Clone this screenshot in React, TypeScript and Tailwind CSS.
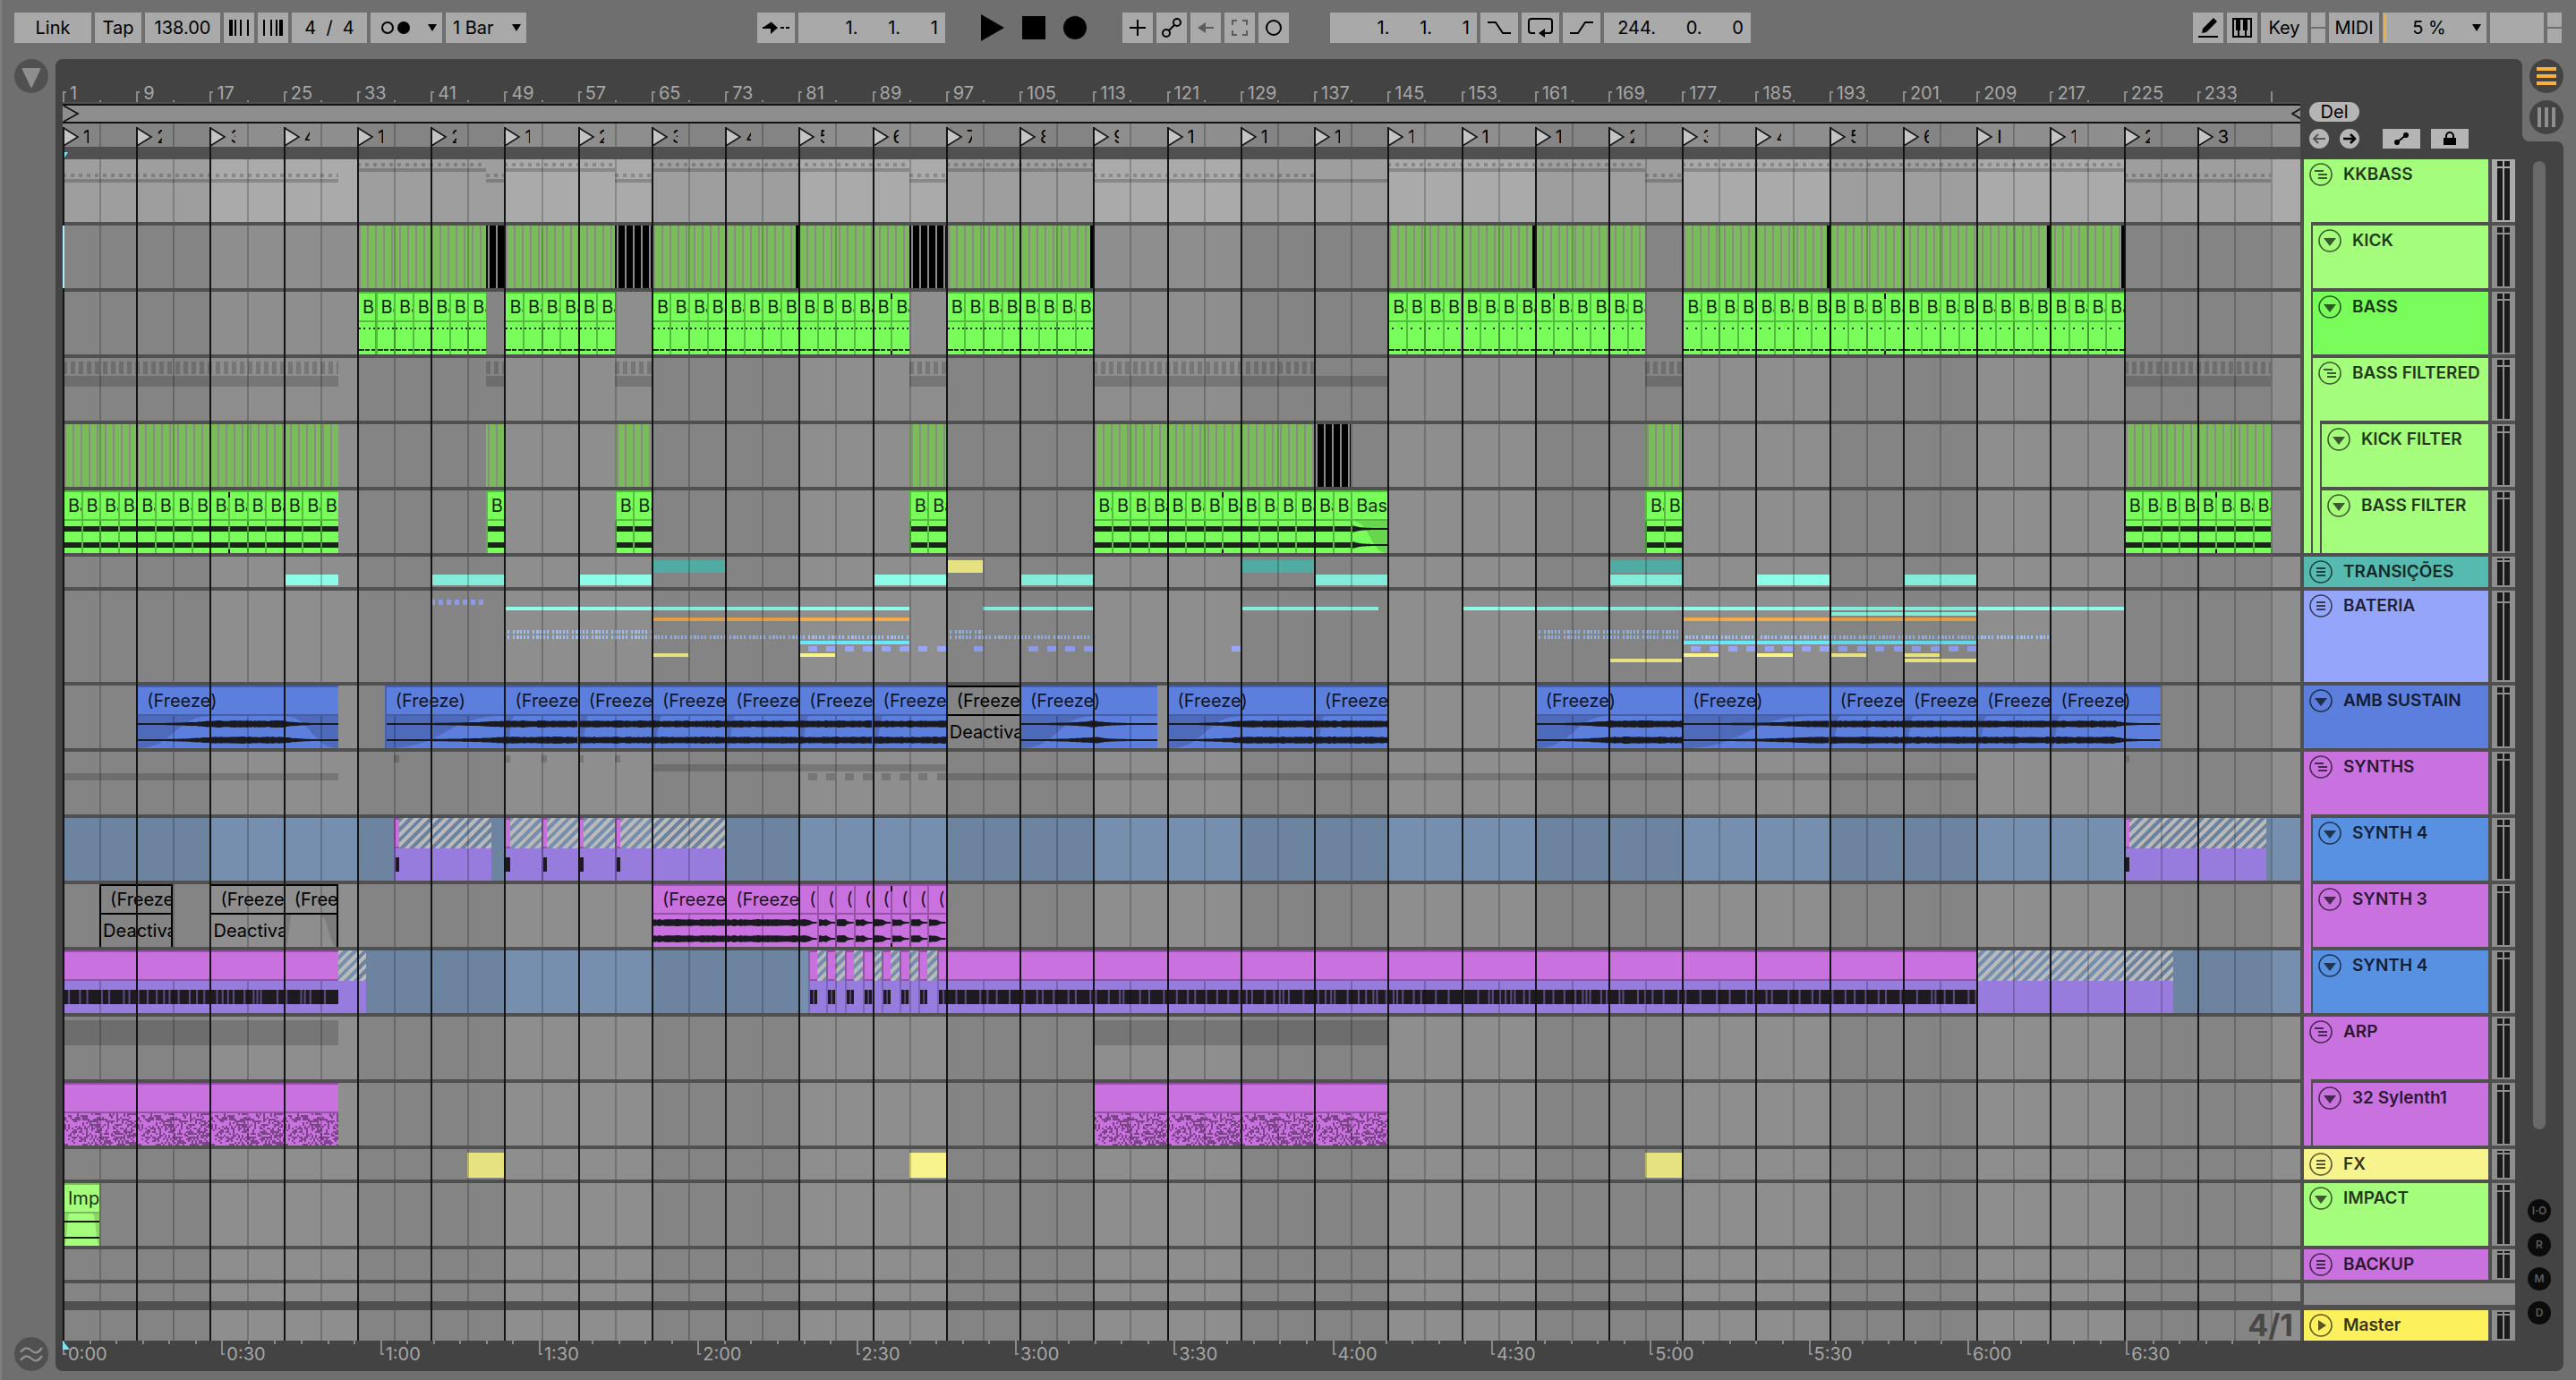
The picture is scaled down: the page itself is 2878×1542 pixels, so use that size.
import type { ReactNode } from "react"
import clsx from "clsx"

// number of bars that fit in the arrangement view
const VISIBLE_BARS = 243.2

type Range = [number, number]

const place = (start: number, end: number) => ({
  left: `${((start - 1) / VISIBLE_BARS) * 100}%`,
  width: `${((end - start) / VISIBLE_BARS) * 100}%`,
})

const at = (bar: number) => ({ left: `${((bar - 1) / VISIBLE_BARS) * 100}%` })

const every = (from: number, to: number, step: number) => {
  const list: number[] = []
  for (let i = from; i <= to; i += step) list.push(i)
  return list
}

const majorBars = every(1, 233, 8)
const minorBars = [...every(5, 237, 8), 241]
const shadedBands = every(1, 225, 32)

function random(seed: number) {
  let s = seed
  return () => {
    s = (s * 1103515245 + 12345) % 2147483648
    return s / 2147483648
  }
}

/* ---------- small drawing helpers ---------- */

interface SegProps {
  range: Range
  className: string
}

function Seg({ range, className }: SegProps) {
  return <div className={clsx("absolute", className)} style={place(range[0], range[1])} />
}

function Segs({ ranges, className }: { ranges: Range[]; className: string }) {
  return (
    <>
      {ranges.map((range) => (
        <Seg key={range[0]} range={range} className={className} />
      ))}
    </>
  )
}

interface WaveProps {
  bars: number
  fadeIn?: number
  fadeOut?: number
  seed?: number
  amp?: number
  className: string
}

function Wave({ bars, fadeIn = 0, fadeOut = 0, seed = 1, amp = 4, className }: WaveProps) {
  const next = random(seed * 97 + 13)
  const width = Math.round(bars * 10)
  const top: string[] = []
  const bottom: string[] = []
  for (let x = 0; x <= width; x += 2) {
    const bar = x / 10
    let level = 1
    if (fadeIn && bar < fadeIn) level = Math.pow(bar / fadeIn, 3)
    if (fadeOut && bar > bars - fadeOut) level = Math.min(level, Math.pow((bars - bar) / fadeOut, 4))
    const peak = 1 + (amp - 1) * level * (0.7 + next() * 0.3)
    top.push(`${x} ${(6 - peak).toFixed(1)}`)
    bottom.unshift(`${x} ${(6 + peak).toFixed(1)}`)
  }
  return (
    <svg viewBox={`0 0 ${width} 12`} preserveAspectRatio="none" className={clsx("absolute left-0 h-3 w-full", className)}>
      <path d={`M${top.join("L")}L${bottom.join("L")}Z`} className="fill-[#1a1b20]" />
    </svg>
  )
}

interface FadeProps {
  bars: number
  fadeIn?: number
  fadeOut?: number
  className: string
}

function Fade({ bars, fadeIn = 0, fadeOut = 0, className }: FadeProps) {
  const w = bars * 10
  const a = fadeIn * 10
  const b = w - fadeOut * 10
  return (
    <svg viewBox={`0 0 ${w} 36`} preserveAspectRatio="none" className={clsx("absolute inset-0 h-full w-full", className)}>
      {fadeIn > 0 && <path d={`M0 0V36C${a * 0.5} 36 ${a * 0.5} 0 ${a} 0Z`} />}
      {fadeOut > 0 && <path d={`M${w} 0V36C${(b + w) / 2} 36 ${(b + w) / 2} 0 ${b} 0Z`} />}
    </svg>
  )
}

function NoteBlock({ bars, seed }: { bars: number; seed: number }) {
  const next = random(seed)
  const width = bars * 10
  const gaps: number[] = []
  for (let x = 4; x < width; x += 4 + Math.round(next() * 7) * 2) gaps.push(x)
  return (
    <svg viewBox={`0 0 ${width} 16`} preserveAspectRatio="none" className="absolute top-[10px] left-0 h-4 w-full">
      <rect width={width} height="16" className="fill-[#1e1b20]" />
      <path d={gaps.map((x) => `M${x} 0h2v16h-2Z`).join("")} className="fill-[#5c4a82]" />
    </svg>
  )
}

function arpCells() {
  const next = random(77)
  let d = ""
  for (let y = 0; y < 36; y += 2) {
    for (let x = 0; x < 82; x += 2) {
      if (next() < 0.42) d += `M${x} ${y}h2v2h-2Z`
    }
  }
  return d
}
const arpPath = arpCells()

/* ---------- clips ---------- */

const tones = {
  green: { title: "bg-[#78fd5a] border-[#54bd3f]", body: "bg-[#78fd5a] border-[#54bd3f]", fade: "fill-[#66d64c]" },
  lime: { title: "bg-[#a5fd7c] border-[#7cbc5e]", body: "bg-[#a5fd7c] border-[#7cbc5e]", fade: "fill-[#8cd66a]" },
  blue: { title: "bg-[#5c7fde] border-[#4560a8]", body: "bg-[#5c7fde] border-[#4560a8]", fade: "fill-[#4e6bbb]" },
  pink: { title: "bg-[#c871df] border-[#9553a6]", body: "bg-[#c871df] border-[#9553a6]", fade: "fill-[#aa60bd]" },
  violet: { title: "bg-[#c871df] border-[#9553a6]", body: "bg-[#977cde] border-[#7a63b8]", fade: "fill-[#aa60bd]" },
}

interface ClipProps {
  range: Range
  tone: keyof typeof tones
  label?: string
  indent?: boolean
  children?: ReactNode
}

function Clip({ range, tone, label, indent, children }: ClipProps) {
  const t = tones[tone]
  return (
    <div className="absolute inset-y-0 overflow-hidden" style={place(range[0], range[1])}>
      <div className={clsx("absolute inset-x-0 top-[34px] bottom-0 z-20 overflow-hidden border-l-2", t.body)}>{children}</div>
      <div
        className={clsx(
          "absolute inset-x-0 top-0 z-40 h-[34px] overflow-hidden border-y-2 border-l-2 text-xl leading-[30px] whitespace-nowrap text-black/85",
          indent ? "pl-2.5" : "pl-1",
          t.title,
        )}
      >
        {label}
      </div>
    </div>
  )
}

function OffClip({ range, label, note, end }: { range: Range; label: string; note?: string; end?: boolean }) {
  return (
    <div
      className={clsx("absolute inset-y-0 z-40 overflow-hidden border-l-2 border-black text-xl whitespace-nowrap text-black", end && "border-r-2")}
      style={place(range[0], range[1])}
    >
      <div className="h-[34px] overflow-hidden border-y-2 border-black pl-2.5 leading-[30px]">{label}</div>
      <div className="relative h-9 overflow-hidden pl-0.5 leading-9">
        {!note && <Fade bars={6} fadeIn={0.8} fadeOut={2} className="fill-black/12" />}
        {note}
      </div>
    </div>
  )
}

function Hatch({ range, foot = true }: { range: Range; foot?: boolean }) {
  return (
    <div className="absolute inset-y-0" style={place(range[0], range[1])}>
      <div className="absolute inset-x-0 top-0 z-20 h-[34px] bg-[repeating-linear-gradient(135deg,#b9b9b9_0_4px,transparent_4px_8px)]" />
      {foot && <div className="absolute inset-x-0 top-[34px] bottom-0 z-20 bg-[#977cde]" />}
    </div>
  )
}

const kickStripes = "inset-y-0 z-20 bg-[repeating-linear-gradient(90deg,#7abb5c_0_2px,#8e888b_2px_4px,#7abb5c_4px_9px)]"
const kickMuted = "inset-y-0 z-20 bg-[repeating-linear-gradient(90deg,#000_0_2px,#8a8a8a_2px_4px,#000_4px_9px)]"
const bassDots = "bg-[repeating-linear-gradient(90deg,#12300c_0_2px,transparent_2px_5px,#12300c_5px_7px,transparent_7px_11px)]"
const bassSparse = "bg-[repeating-linear-gradient(90deg,transparent_0_3px,#12300c_3px_5px,transparent_5px_10px)]"
const bassLine = "bg-[repeating-linear-gradient(90deg,#12300c_0_6px,transparent_6px_7px,#12300c_7px_12px,transparent_12px_14px)]"

// two-bar loops that fill a range
const loops = (ranges: Range[]) => ranges.flatMap(([s, e]) => every(s, e - 2, 2).map((b): Range => [b, b + 2]))

const bassMain: Range[] = [[33, 47], [49, 61], [65, 93], [97, 113], [145, 173], [177, 225]]
const bassBreak: Range[] = [[1, 31], [47, 49], [61, 65], [93, 97], [113, 145], [173, 177], [225, 241]]
const kickBreak: Range[] = [[1, 31], [47, 49], [61, 65], [93, 97], [113, 137], [173, 177], [225, 241]]

function Split({ bar }: { bar: number }) {
  return (
    <div className="absolute inset-y-0 z-40 flex w-0.5 flex-col justify-between pt-0.5" style={at(bar)}>
      <div className="h-1.5 bg-black" />
      <div className="h-1 bg-black" />
    </div>
  )
}

function BassClips() {
  return (
    <>
      {loops(bassMain).map((r) => (
        <Clip key={r[0]} range={r} tone="green" label="Bass">
          <div className={clsx("mt-1.5 h-0.5", r[0] < 145 ? bassDots : bassSparse)} />
          <div className={clsx("mt-[22px] h-0.5", bassLine)} />
        </Clip>
      ))}
      <Split bar={91} />
      <Split bar={163} />
      <Split bar={199} />
    </>
  )
}

function BassFilterClips() {
  const blocks: Range[] = [[1, 31], [47, 49], [61, 65], [93, 97], [113, 141], [173, 177], [225, 241]]
  return (
    <>
      {loops(blocks).map((r) => (
        <Clip key={r[0]} range={r} tone="green" label="Bass">
          <div className="mt-1.5 h-1.5 bg-[#1a2418]" />
          <div className="mt-3 h-1.5 bg-[#1a2418]" />
        </Clip>
      ))}
      <Clip range={[141, 145]} tone="green" label="Bass">
        <Fade bars={4} fadeOut={4} className={tones.green.fade} />
        <Wave bars={4} fadeOut={4} className="top-[3px]" />
        <Wave bars={4} fadeOut={4} className="top-[21px]" />
      </Clip>
      <Split bar={19} />
      <Split bar={127} />
      <Split bar={235} />
    </>
  )
}

const ambClips: { range: Range; fadeIn: number; fadeOut?: number }[] = [
  { range: [9, 31], fadeIn: 8, fadeOut: 6 },
  { range: [36, 49], fadeIn: 13 },
  { range: [49, 57], fadeIn: 1 },
  { range: [57, 65], fadeIn: 1 },
  { range: [65, 73], fadeIn: 1 },
  { range: [73, 81], fadeIn: 1 },
  { range: [81, 89], fadeIn: 1 },
  { range: [89, 97], fadeIn: 1 },
  { range: [105, 120], fadeIn: 8, fadeOut: 7 },
  { range: [121, 137], fadeIn: 8 },
  { range: [137, 145], fadeIn: 1 },
  { range: [161, 177], fadeIn: 8 },
  { range: [177, 193], fadeIn: 14 },
  { range: [193, 201], fadeIn: 1 },
  { range: [201, 209], fadeIn: 1 },
  { range: [209, 217], fadeIn: 1 },
  { range: [217, 229], fadeIn: 1, fadeOut: 5 },
]

function AmbClips() {
  return (
    <>
      {ambClips.map(({ range, fadeIn, fadeOut }, i) => {
        const bars = range[1] - range[0]
        const rise = fadeIn > 1 ? fadeIn : 0
        const shadeOut = range[0] === 9 ? fadeOut : 0
        return (
          <Clip key={range[0]} range={range} tone="blue" label="(Freeze)" indent>
            <Fade bars={bars} fadeIn={fadeIn} fadeOut={shadeOut} className={tones.blue.fade} />
            <Wave bars={bars} fadeIn={rise} fadeOut={fadeOut} seed={i + 1} className="top-[3px]" />
            <Wave bars={bars} fadeIn={rise} fadeOut={fadeOut} seed={i + 31} className="top-[21px]" />
          </Clip>
        )
      })}
      <OffClip range={[97, 105]} label="(Freeze)" note="Deactivated" />
    </>
  )
}

function SynthThreeClips() {
  return (
    <>
      <OffClip range={[5, 13]} label="(Freeze)" note="Deactivated" end />
      <OffClip range={[17, 25]} label="(Freeze)" note="Deactivated" />
      <OffClip range={[25, 31]} label="(Freeze)" end />
      {([[65, 73], [73, 81]] as Range[]).map((r) => (
        <Clip key={r[0]} range={r} tone="pink" label="(Freeze)" indent>
          <Wave bars={8} seed={r[0]} className="top-[3px]" />
          <Wave bars={8} seed={r[0]} className="top-[21px]" />
        </Clip>
      ))}
      {every(81, 95, 2).map((b) => (
        <Clip key={b} range={[b, b + 2]} tone="pink" label="(Freeze)" indent>
          <Wave bars={2} fadeOut={1} seed={b} className="top-[3px]" />
          <Wave bars={2} fadeOut={1} seed={b} className="top-[21px]" />
        </Clip>
      ))}
      <Split bar={91} />
    </>
  )
}

function SynthStabs() {
  const stabs: Range[] = [[37, 47.6], [49, 53], [53, 57], [57, 61], [61, 73], [225, 240.5]]
  return (
    <>
      <Segs ranges={stabs} className="top-[34px] bottom-0 z-20 border-l-2 border-[#7a63b8] bg-[#977cde]" />
      {stabs.map((r) => (
        <Hatch key={r[0]} range={r} foot={false} />
      ))}
      {stabs.map(([s]) => (
        <Seg key={s} range={[s, s + 0.6]} className="top-0 z-20 h-[34px] border-y-2 border-l-2 border-[#9553a6] bg-[#c871df]" />
      ))}
      {stabs.map(([s]) => (
        <Seg key={s} range={[s + 0.2, s + 0.6]} className="top-11 z-20 h-4 bg-[#1e1b20]" />
      ))}
    </>
  )
}

function SynthLine() {
  return (
    <>
      <Clip range={[1, 31]} tone="violet">
        <NoteBlock bars={30} seed={5} />
      </Clip>
      <Hatch range={[31, 34]} />
      {every(82, 94, 2).map((b) => (
        <Hatch key={b} range={[b + 0.9, b + 2]} />
      ))}
      {every(82, 94, 2).map((b) => (
        <Clip key={b} range={[b, b + 1]} tone="violet">
          <NoteBlock bars={1} seed={b} />
        </Clip>
      ))}
      <Clip range={[96, 209]} tone="violet">
        <NoteBlock bars={113} seed={11} />
      </Clip>
      <Hatch range={[209, 230.4]} />
    </>
  )
}

function ArpClips() {
  return (
    <>
      {([[1, 31], [113, 145]] as Range[]).map((r, i) => (
        <Clip key={r[0]} range={r} tone="pink">
          <svg className="absolute inset-0 h-full w-full">
            <defs>
              <pattern id={`arp-${i}`} width="82" height="36" patternUnits="userSpaceOnUse">
                <path d={arpPath} className="fill-[#7c4489]" />
              </pattern>
            </defs>
            <rect width="100%" height="100%" fill={`url(#arp-${i})`} />
          </svg>
        </Clip>
      ))}
    </>
  )
}

/* ---------- group overviews ---------- */

const dash = "bg-[repeating-linear-gradient(90deg,rgba(0,0,0,0.2)_0_4px,transparent_4px_9px)]"
const wideDash = "bg-[repeating-linear-gradient(90deg,rgba(0,0,0,0.17)_0_5px,transparent_5px_9px)]"

function BateriaOverview() {
  const hats = "bg-[repeating-linear-gradient(90deg,#97bdf2_0_2px,transparent_2px_4px,#97bdf2_4px_6px,transparent_6px_10px,#97bdf2_10px_12px,transparent_12px_14px,#97bdf2_14px_17px,transparent_17px_18px,#97bdf2_18px_20px,transparent_20px_22px)]"
  const hits = [...every(82, 96, 2), 100, ...every(106, 112, 2), 128, ...every(178, 208, 2)]
  return (
    <>
      <Seg range={[41, 46.8]} className="top-2.5 h-1.5 bg-[repeating-linear-gradient(90deg,#97a6fa_0_5px,transparent_5px_9px)]" />
      <Segs ranges={[[49, 93], [101, 113], [129, 144], [153, 225]]} className="top-[18px] h-1 bg-[#8dfde8]" />
      <Seg range={[193, 209]} className="top-6 h-1 bg-[#8dfde8]" />
      <Segs ranges={[[65, 93], [177, 209]]} className="top-[30px] h-1 bg-[#f3aa47]" />
      <Segs ranges={[[49, 65], [97, 101], [161, 177]]} className={clsx("top-11 h-1", hats)} />
      <Segs ranges={[[49, 93], [97, 113], [161, 217]]} className={clsx("top-[50px] h-1", hats)} />
      <Segs ranges={[[81, 93], [177, 209]]} className="top-14 h-1 bg-[#65e9ff]" />
      {hits.map((b) => (
        <Seg key={b} range={[b, b + 1]} className="top-[62px] h-1.5 bg-[#97a6fa]" />
      ))}
      <Segs ranges={[[65, 69], [81, 85], [177, 181], [185, 189], [193, 197], [201, 205]]} className="top-[70px] h-1 bg-[#f8f38b]" />
      <Segs ranges={[[169, 177], [201, 209]]} className="top-[76px] h-1 bg-[#f8f38b]" />
    </>
  )
}

function SynthsOverview() {
  const shade = "bg-black/17"
  return (
    <>
      {[37, 49, 53, 57, 61, 225].map((b) => (
        <Seg key={b} range={[b, b + 0.6]} className={clsx("top-1 h-2", shade)} />
      ))}
      <Seg range={[65, 97]} className={clsx("top-3.5 h-2", shade)} />
      <Segs ranges={[[1, 31], [97, 209]]} className={clsx("top-6 h-2", shade)} />
      {every(82, 96, 2).map((b) => (
        <Seg key={b} range={[b, b + 1]} className={clsx("top-6 h-2", shade)} />
      ))}
    </>
  )
}

/* ---------- lanes ---------- */

interface LaneProps {
  size?: "tall" | "short" | "large" | "blank" | "marks"
  base?: string
  children?: ReactNode
}

const laneHeights = {
  tall: "h-[70px]",
  short: "h-[34px]",
  large: "h-[102px]",
  blank: "h-5",
  marks: "h-[26px]",
}

function Lane({ size = "tall", base = "bg-[#8e8e8e]", children }: LaneProps) {
  return (
    <div className={clsx("relative overflow-hidden", laneHeights[size], base)}>
      {children}
      {shadedBands.map((b) => (
        <Seg key={b} range={[b, b + 16]} className="inset-y-0 z-10 bg-black/7" />
      ))}
      {minorBars.map((b) => (
        <div key={b} className="absolute inset-y-0 z-30 w-0.5 bg-black/20" style={at(b)} />
      ))}
    </div>
  )
}

function Lanes() {
  return (
    <div className="flex flex-col gap-1">
      <Lane base="bg-[#aaaaaa]">
        <Segs ranges={bassMain} className={clsx("top-1 h-1", dash)} />
        <Segs ranges={bassMain} className="top-2.5 h-1 bg-black/20" />
        <Segs ranges={kickBreak} className={clsx("top-4 h-1", dash)} />
        <Segs ranges={bassBreak} className="top-[22px] h-1 bg-black/20" />
      </Lane>
      <Lane>
        <Segs ranges={bassMain} className={kickStripes} />
        <Segs ranges={[[47, 49], [61, 65], [93, 97]]} className={kickMuted} />
        {[80.7, 112.7, 160.7, 192.7, 216.7, 224.7].map((b) => (
          <Seg key={b} range={[b, b + 0.3]} className="inset-y-0 z-20 bg-black" />
        ))}
        <div className="absolute inset-y-0 left-0 z-60 w-0.5 bg-[#a9eefb]" />
      </Lane>
      <Lane>
        <BassClips />
      </Lane>
      <Lane>
        <Segs ranges={kickBreak} className={clsx("top-1 h-3.5", wideDash)} />
        <Segs ranges={bassBreak} className="top-5 h-3 bg-black/17" />
      </Lane>
      <Lane>
        <Segs ranges={kickBreak} className={kickStripes} />
        <Seg range={[137, 141]} className={kickMuted} />
      </Lane>
      <Lane>
        <BassFilterClips />
      </Lane>
      <Lane size="short">
        <Segs ranges={[[65, 73], [129, 137], [169, 177]]} className="top-1 h-3.5 bg-[#57bab0]" />
        <Seg range={[97, 101]} className="top-1 h-3.5 bg-[#f8f38b]" />
        <Segs
          ranges={[[25, 31], [41, 49], [57, 65], [89, 97], [105, 113], [137, 145], [169, 177], [185, 193], [201, 209]]}
          className="top-5 h-3 bg-[#8dfde8]"
        />
      </Lane>
      <Lane size="large">
        <BateriaOverview />
      </Lane>
      <Lane>
        <AmbClips />
      </Lane>
      <Lane>
        <SynthsOverview />
      </Lane>
      <Lane base="bg-[#768fae]">
        <SynthStabs />
      </Lane>
      <Lane>
        <SynthThreeClips />
      </Lane>
      <Lane base="bg-[#768fae]">
        <SynthLine />
      </Lane>
      <Lane>
        <Segs ranges={[[1, 31], [113, 145]]} className="top-1 h-7 bg-black/17" />
      </Lane>
      <Lane>
        <ArpClips />
      </Lane>
      <Lane size="short">
        <Segs ranges={[[45, 49], [93, 97], [173, 177]]} className="top-1 h-7 bg-[#f8f38b]" />
      </Lane>
      <Lane>
        <Clip range={[1, 5]} tone="lime" label="Impact">
          <Fade bars={4} fadeIn={0.6} fadeOut={0.8} className={tones.lime.fade} />
          <div className="relative mt-2 h-0.5 bg-[#16200f]" />
          <div className="relative mt-4 h-0.5 bg-[#16200f]" />
        </Clip>
      </Lane>
      <Lane size="short" />
      <Lane size="blank" />
      <div className="relative mt-1.5">
        <Lane size="short" />
        <span className="absolute right-2 bottom-0 z-40 text-[34px] leading-[34px] font-bold text-[#484848]">4/1</span>
      </div>
    </div>
  )
}

/* ---------- rulers ---------- */

function BarRuler() {
  return (
    <div className="relative h-12 overflow-hidden text-[#a6a6a6]">
      {majorBars.map((b) => (
        <div key={b} className="absolute bottom-0 flex h-5 gap-1" style={at(b)}>
          <div className="mt-2 h-3 w-1 border-t-2 border-l-2 border-[#8a8a8a]" />
          <span className="text-xl leading-[20px]">{b}</span>
        </div>
      ))}
      {every(5, 237, 8).map((b) => (
        <div key={b} className="absolute bottom-0 h-0.5 w-0.5 bg-[#8a8a8a]" style={at(b)} />
      ))}
      <div className="absolute bottom-0 h-3 w-0.5 bg-[#8a8a8a]" style={at(241)} />
    </div>
  )
}

const locatorNames = [
  "1", "2", "3", "4", "1", "2", "1", "2", "3", "4", "5", "6", "7", "8", "9",
  "10", "11", "12", "1", "1", "1", "2", "3", "4", "5", "6", "I", "1", "2", "3",
]

function Locators() {
  return (
    <div className="relative">
      <Lane size="marks" />
      {majorBars.map((b, i) => (
        <button key={b} type="button" className="absolute bottom-0 z-40 flex h-[22px] items-center gap-1" style={at(b)} aria-label={`Locator ${b}`}>
          <svg width="19" height="22" viewBox="0 0 19 22">
            <path d="M1 1 17 11 1 21Z" fill="#c4c4c4" stroke="#161616" strokeWidth="1.6" />
          </svg>
          <span className={clsx("overflow-hidden text-left text-xl leading-[22px]", b < 233 && "w-1.5")}>{locatorNames[i]}</span>
        </button>
      ))}
    </div>
  )
}

function TimeRuler() {
  // 138 bpm: one bar of 4/4 lasts 240 / 138 seconds
  const barAt = (sec: number) => 1 + (sec * 138) / 240
  const label = (sec: number) => `${Math.floor(sec / 60)}:${String(sec % 60).padStart(2, "0")}`
  return (
    <div className="relative h-[34px] text-[#a6a6a6]">
      {every(0, 415, 5).map((s) => (
        <div key={s} className="absolute top-0 h-1 w-0.5 bg-[#8a8a8a]" style={at(barAt(s))} />
      ))}
      {every(0, 390, 30).map((s) => (
        <div key={s} className="absolute top-0 flex gap-0.5" style={at(barAt(s))}>
          <div className="h-4 w-1 border-b-2 border-l-2 border-[#8a8a8a]" />
          <span className="mt-1 text-xl leading-[22px]">{label(s)}</span>
        </div>
      ))}
      <svg width="8" height="10" className="absolute top-0 left-0">
        <path d="M0 0 8 10H0Z" fill="#7fe3f7" />
      </svg>
    </div>
  )
}

/* ---------- track headers ---------- */

type Glyph = "group" | "lanes" | "fold" | "play"

function HeaderIcon({ glyph }: { glyph: Glyph }) {
  return (
    <svg width="26" height="26" viewBox="0 0 26 26" fill="none" stroke="currentColor" strokeWidth="1.6" className="shrink-0 opacity-80">
      <circle cx="13" cy="13" r="12" />
      {glyph === "group" && <path d="M6 9h10M10 13h10M10 17h10" strokeWidth="2" />}
      {glyph === "lanes" && <path d="M8 9h10M8 13h10M8 17h10" strokeWidth="2" />}
      {glyph === "fold" && <path d="M6 10h14l-7 9Z" fill="currentColor" stroke="none" />}
      {glyph === "play" && <path d="M10 7v12l9-6Z" fill="currentColor" stroke="none" />}
    </svg>
  )
}

interface HeaderProps {
  name: string
  glyph: Glyph
  color?: string
  size?: keyof typeof laneHeights
}

function Header({ name, glyph, color, size = "tall" }: HeaderProps) {
  return (
    <div className={clsx("flex items-start gap-3 overflow-hidden pt-1 pl-1.5 text-black/80", laneHeights[size], color)}>
      <button type="button" aria-label={`Unfold ${name}`}>
        <HeaderIcon glyph={glyph} />
      </button>
      <span className="text-[19px] leading-[26px] font-semibold whitespace-nowrap">{name}</span>
    </div>
  )
}

function Group({ color, header, children }: { color: string; header: ReactNode; children: ReactNode }) {
  return (
    <div className={color}>
      {header}
      <div className="ml-2 flex flex-col gap-1 bg-[#505050] pt-1 pl-0.5">{children}</div>
    </div>
  )
}

function Headers() {
  return (
    <div className="flex w-[206px] flex-col gap-1">
      <Group color="bg-[#a5fd7c]" header={<Header name="KKBASS" glyph="group" />}>
        <Header name="KICK" glyph="fold" color="bg-[#a5fd7c]" />
        <Header name="BASS" glyph="fold" color="bg-[#78fd5a]" />
        <Group color="bg-[#a5fd7c]" header={<Header name="BASS FILTERED" glyph="group" />}>
          <Header name="KICK FILTER" glyph="fold" color="bg-[#a5fd7c]" />
          <Header name="BASS FILTER" glyph="fold" color="bg-[#a5fd7c]" />
        </Group>
      </Group>
      <Header name="TRANSIÇÕES" glyph="lanes" color="bg-[#57bab0]" size="short" />
      <Header name="BATERIA" glyph="lanes" color="bg-[#95a5fa]" size="large" />
      <Header name="AMB SUSTAIN" glyph="fold" color="bg-[#5c7fde]" />
      <Group color="bg-[#c871df]" header={<Header name="SYNTHS" glyph="group" />}>
        <Header name="SYNTH 4" glyph="fold" color="bg-[#5891e1]" />
        <Header name="SYNTH 3" glyph="fold" color="bg-[#c871df]" />
        <Header name="SYNTH 4" glyph="fold" color="bg-[#5891e1]" />
      </Group>
      <Group color="bg-[#c871df]" header={<Header name="ARP" glyph="group" />}>
        <Header name="32 Sylenth1" glyph="fold" color="bg-[#c871df]" />
      </Group>
      <Header name="FX" glyph="lanes" color="bg-[#f7f38d]" size="short" />
      <Header name="IMPACT" glyph="fold" color="bg-[#a5fd7c]" />
      <Header name="BACKUP" glyph="lanes" color="bg-[#c871df]" size="short" />
      <div className="h-6 bg-[#8e8e8e]" />
      <div className="mt-0.5">
        <Header name="Master" glyph="play" color="bg-[#fcf05c]" size="short" />
      </div>
    </div>
  )
}

function Meter({ size = "tall", active }: { size?: keyof typeof laneHeights; active?: boolean }) {
  const peak = size === "short" ? "h-0.5" : size === "large" ? "h-2.5" : "h-1.5"
  return (
    <div className={clsx("flex justify-center gap-0.5 py-0.5", laneHeights[size], active ? "bg-[#aaaaaa]" : "bg-[#8e8e8e]")}>
      {[0, 1].map((ch) => (
        <div key={ch} className="flex w-1.5 flex-col gap-0.5">
          <div className={clsx("bg-[#1a1a1a]", peak)} />
          <div className="flex-1 bg-[#1a1a1a]" />
        </div>
      ))}
    </div>
  )
}

const meterSizes: (keyof typeof laneHeights)[] = [
  "tall", "tall", "tall", "tall", "tall", "tall", "short", "large", "tall", "tall",
  "tall", "tall", "tall", "tall", "tall", "short", "tall", "short",
]

function Meters() {
  return (
    <div className="flex w-[30px] flex-col gap-1">
      {meterSizes.map((size, i) => (
        <div key={i} className="pl-1">
          <Meter size={size} active={i === 0} />
        </div>
      ))}
      <div className="h-6 bg-[#8e8e8e]" />
      <div className="mt-0.5 pl-1">
        <Meter size="short" />
      </div>
    </div>
  )
}

function LocatorControls() {
  const chip = "flex h-[22px] items-center justify-center bg-[#b5b5b5] text-black"
  return (
    <div className="flex h-16 flex-col gap-2 pl-2.5">
      <button type="button" className={clsx(chip, "w-14 rounded-full text-xl")}>
        Del
      </button>
      <div className="flex items-center">
        <button type="button" aria-label="Previous locator" className={clsx(chip, "w-[22px] rounded-full")}>
          <svg width="16" height="14" viewBox="0 0 16 14" fill="none" stroke="#555" strokeWidth="2">
            <path d="M15 7H2M7 2 2 7l5 5" />
          </svg>
        </button>
        <button type="button" aria-label="Next locator" className={clsx(chip, "ml-3 w-[22px] rounded-full")}>
          <svg width="16" height="14" viewBox="0 0 16 14" fill="none" stroke="#000" strokeWidth="2.5">
            <path d="M1 7h13M9 2l5 5-5 5" />
          </svg>
        </button>
        <button type="button" aria-label="Automation mode" className={clsx(chip, "ml-[26px] w-[42px]")}>
          <svg width="16" height="14" viewBox="0 0 16 14" stroke="#000" strokeWidth="2">
            <path d="M3 11 13 3" />
            <circle cx="3" cy="11" r="2" />
            <circle cx="13" cy="3" r="2" />
          </svg>
        </button>
        <button type="button" aria-label="Lock envelopes" className={clsx(chip, "ml-3 w-[42px]")}>
          <svg width="16" height="16" viewBox="0 0 16 16">
            <path d="M1 7h14v8H1Z" />
            <path d="M4 7V5a4 4 0 0 1 8 0v2" fill="none" stroke="#000" strokeWidth="2" />
          </svg>
        </button>
      </div>
    </div>
  )
}

/* ---------- control bar ---------- */

const surface = "flex h-[34px] items-center bg-[#a9a9a9] text-black"
const box = clsx(surface, "justify-center")

function IconButton({ label, width = "w-[34px]", children }: { label: string; width?: string; children: ReactNode }) {
  return (
    <button type="button" aria-label={label} className={clsx(box, width)}>
      {children}
    </button>
  )
}

function Field({ label, value, className }: { label: string; value: string; className: string }) {
  return <input aria-label={label} defaultValue={value} className={clsx("h-[34px] bg-[#a9a9a9] text-xl text-black outline-none", className)} />
}

function Caret() {
  return (
    <svg width="10" height="8" viewBox="0 0 10 8">
      <path d="M0 0h10L5 8Z" />
    </svg>
  )
}

function SplitLamp() {
  return (
    <div className="flex h-[34px] w-4 flex-col gap-0.5">
      <div className="flex-1 bg-[#a9a9a9]" />
      <div className="flex-1 bg-[#a9a9a9]" />
    </div>
  )
}

function ControlBar() {
  return (
    <header className="flex h-[66px] items-start gap-1 px-4 pt-3.5 text-xl">
      <button type="button" className={clsx(box, "w-[86px]")}>Link</button>
      <button type="button" className={clsx(box, "w-[52px]")}>Tap</button>
      <Field label="Tempo" value="138.00" className="w-[84px] text-center" />
      <IconButton label="Nudge down">
        <svg width="22" height="18" viewBox="0 0 22 18">
          <path d="M0 0h4v18H0ZM6 0h2v18H6ZM12 0h2v18h-2ZM20 0h2v18h-2Z" />
        </svg>
      </IconButton>
      <IconButton label="Nudge up">
        <svg width="22" height="18" viewBox="0 0 22 18">
          <path d="M0 0h2v18H0ZM8 0h2v18H8ZM14 0h2v18h-2ZM18 0h4v18h-4Z" />
        </svg>
      </IconButton>
      <Field label="Time signature" value="4  /  4" className="w-[84px] text-center" />
      <button type="button" aria-label="Metronome" className={clsx(surface, "w-20 justify-between pr-1.5 pl-3")}>
        <svg width="32" height="16" viewBox="0 0 32 16">
          <circle cx="7" cy="8" r="6" fill="none" stroke="#000" strokeWidth="2" />
          <circle cx="25" cy="8" r="7" />
        </svg>
        <Caret />
      </button>
      <div className={clsx(surface, "relative w-[90px]")}>
        <select aria-label="Quantization" className="h-full w-full appearance-none bg-transparent pl-2 outline-none">
          <option>1 Bar</option>
        </select>
        <span className="pointer-events-none absolute inset-y-0 right-1.5 flex items-center">
          <Caret />
        </span>
      </div>

      <div className="ml-[254px] flex gap-1">
        <IconButton label="Follow" width="w-[42px]">
          <svg width="30" height="14" viewBox="0 0 30 14">
            <path d="M0 6h9V1L0 7ZM0 6h9V0l8 7-8 7V8H0ZM20 6h4v2h-4ZM26 6h4v2h-4Z" />
          </svg>
        </IconButton>
        <Field label="Arrangement position" value="1.      1.      1" className="w-[164px] pr-2 text-right" />
      </div>
      <div className="ml-9 flex h-[34px] items-center gap-5">
        <button type="button" aria-label="Play">
          <svg width="26" height="30" viewBox="0 0 26 30">
            <path d="M0 0v30l26-15Z" />
          </svg>
        </button>
        <button type="button" aria-label="Stop" className="h-[26px] w-[26px] bg-black" />
        <button type="button" aria-label="Record" className="h-[26px] w-[26px] rounded-full bg-black" />
      </div>
      <div className="ml-9 flex gap-1">
        <IconButton label="Overdub">
          <svg width="20" height="20" viewBox="0 0 20 20" stroke="#000" strokeWidth="2">
            <path d="M10 1v18M1 10h18" />
          </svg>
        </IconButton>
        <IconButton label="Automation arm">
          <svg width="22" height="22" viewBox="0 0 22 22" fill="none" stroke="#000" strokeWidth="2">
            <circle cx="5" cy="17" r="4" />
            <circle cx="17" cy="5" r="4" />
            <path d="M8 14 14 8" />
          </svg>
        </IconButton>
        <IconButton label="Re-enable automation">
          <svg width="18" height="14" viewBox="0 0 18 14" fill="#5c5c5c">
            <path d="M18 6H9V1L0 7l9 6V8h9Z" />
          </svg>
        </IconButton>
        <IconButton label="Capture">
          <svg width="18" height="18" viewBox="0 0 18 18" fill="none" stroke="#5c5c5c" strokeWidth="2">
            <path d="M6 1H1v5M12 1h5v5M6 17H1v-5M12 17h5v-5" />
          </svg>
        </IconButton>
        <IconButton label="Session record">
          <svg width="18" height="18" viewBox="0 0 18 18" fill="none" stroke="#000" strokeWidth="2">
            <circle cx="9" cy="9" r="8" />
          </svg>
        </IconButton>
      </div>
      <div className="ml-[42px] flex gap-1">
        <Field label="Loop start" value="1.      1.      1" className="w-[164px] pr-2 text-right" />
        <IconButton label="Punch in" width="w-[42px]">
          <svg width="26" height="16" viewBox="0 0 26 16" fill="none" stroke="#000" strokeWidth="2">
            <path d="M0 2h9l8 12h9" />
          </svg>
        </IconButton>
        <IconButton label="Loop" width="w-[42px]">
          <svg width="28" height="22" viewBox="0 0 28 22" fill="none" stroke="#000" strokeWidth="2">
            <path d="M8 17H4a3 3 0 0 1-3-3V4a3 3 0 0 1 3-3h20a3 3 0 0 1 3 3v10a3 3 0 0 1-3 3h-6" />
            <path d="M19 12v10l-7-5Z" fill="#000" stroke="none" />
          </svg>
        </IconButton>
        <IconButton label="Punch out" width="w-[42px]">
          <svg width="26" height="16" viewBox="0 0 26 16" fill="none" stroke="#000" strokeWidth="2">
            <path d="M0 14h9l8-12h9" />
          </svg>
        </IconButton>
        <Field label="Loop length" value="244.      0.      0" className="w-[164px] pr-2 text-right" />
      </div>

      <div className="ml-auto flex gap-1">
        <IconButton label="Draw mode">
          <svg width="22" height="22" viewBox="0 0 22 22">
            <path d="M0 20h22v2H0ZM4 17l1-5L17 0l4 4L9 16Z" />
          </svg>
        </IconButton>
        <IconButton label="Computer keyboard">
          <svg width="22" height="22" viewBox="0 0 22 22">
            <path d="M1 1h20v20H1Z" fill="none" stroke="#000" strokeWidth="2" />
            <path d="M4 1h5v13H4ZM12 1h5v13h-5ZM6 13h2v8H6ZM14 13h2v8h-2Z" />
          </svg>
        </IconButton>
        <button type="button" className={clsx(box, "w-[52px]")}>Key</button>
        <SplitLamp />
        <button type="button" className={clsx(box, "w-14")}>MIDI</button>
        <button type="button" className={clsx(surface, "w-[116px] justify-between py-0.5 pr-1.5 pl-0.5")}>
          <span className="h-full w-0.5 bg-[#f7b13c]" />
          5 %
          <Caret />
        </button>
        <div className="h-[34px] w-[60px] bg-[#a9a9a9]" />
        <SplitLamp />
      </div>
    </header>
  )
}

/* ---------- page ---------- */

function Arrangement() {
  return (
    <div className="min-w-0 flex-1">
      <BarRuler />
      <div className="relative isolate bg-[#505050] pt-0.5">
        <div className="flex h-[22px] justify-between overflow-hidden border-y-2 border-[#121212] bg-[#8e8e8e]">
          <svg width="19" height="18" viewBox="0 0 19 18" fill="none" stroke="#161616" strokeWidth="1.8">
            <path d="M1 0 17 9 1 18" />
          </svg>
          <svg width="10" height="18" viewBox="0 0 10 18" fill="none" stroke="#161616" strokeWidth="1.8">
            <path d="M11 3 1 9l10 6" />
          </svg>
        </div>
        <Locators />
        <div className="flex h-3.5 items-end">
          <svg width="6" height="8" viewBox="0 0 6 8">
            <path d="M0 0h6L1 8H0Z" fill="#7fe3f7" />
          </svg>
        </div>
        <Lanes />
        <div className="pointer-events-none absolute inset-x-0 top-7 bottom-0 z-50">
          {majorBars.map((b) => (
            <div key={b} className="absolute inset-y-0 w-0.5 bg-[#141414]" style={at(b)} />
          ))}
        </div>
      </div>
      <TimeRuler />
    </div>
  )
}

const sections = ["I·O", "R", "M", "D"]

export default function App() {
  return (
    <div className="min-h-screen border-l-2 border-[#808080] bg-[#6f6f6f] pb-2.5 font-['Inter','Noto_Sans',sans-serif]">
      <div className="-ml-0.5">
        <ControlBar />
        <main className="flex pr-3.5">
          <aside className="flex w-[62px] flex-col justify-between pl-4">
            <button type="button" aria-label="Show browser" className="flex h-[38px] w-[38px] items-center justify-center rounded-full bg-[#505050]">
              <svg width="22" height="22" viewBox="0 0 22 22" className="mt-1">
                <path d="M2 0h18q2 0 1 2L12 21q-1 2-2 0L1 2Q0 0 2 0Z" fill="#8e8e8e" />
              </svg>
            </button>
            <button type="button" aria-label="Groove pool" className="flex h-[38px] w-[38px] items-center justify-center rounded-full bg-[#505050]">
              <svg width="26" height="22" viewBox="0 0 26 22" fill="none" stroke="#8e8e8e" strokeWidth="2.4">
                <path d="M1 9q6-8 12-2t12-3M1 18q6-8 12-2t12-3" />
              </svg>
            </button>
          </aside>
          <section className="flex min-w-0 flex-1 rounded-l-lg rounded-tr-lg bg-[#434343] pr-2 pl-2">
            <Arrangement />
            <div className="pt-12">
              <LocatorControls />
              <div className="flex bg-[#505050] pl-1">
                <Headers />
                <Meters />
              </div>
            </div>
          </section>
          <div className="flex w-[46px] flex-col">
            <div className="bg-[#434343]">
              <div className="flex h-[92px] flex-col gap-2 rounded-bl-lg bg-[#6f6f6f] pl-2">
                <button type="button" aria-label="Arrangement view" className="flex h-[38px] w-[38px] items-center justify-center rounded-full bg-[#434343]">
                  <svg width="22" height="20" viewBox="0 0 22 20">
                    <path d="M0 0h22v4H0ZM0 8h22v4H0ZM0 16h22v4H0Z" fill="#f7b13c" />
                  </svg>
                </button>
                <button type="button" aria-label="Session view" className="flex h-[38px] w-[38px] items-center justify-center rounded-full bg-[#434343]">
                  <svg width="20" height="22" viewBox="0 0 20 22">
                    <path d="M0 0h4v22H0ZM8 0h4v22H8ZM16 0h4v22h-4Z" fill="#8e8e8e" />
                  </svg>
                </button>
              </div>
            </div>
            <div className="flex flex-1 flex-col items-center rounded-r-lg bg-[#434343] pt-[22px] pr-2">
              <div className="w-3.5 flex-1 rounded-full bg-[#696969]" />
              <div className="mt-[78px] mb-[52px] flex flex-col gap-3">
                {sections.map((name) => (
                  <button key={name} type="button" className="h-[26px] w-[26px] rounded-full bg-[#0b0b0b] text-xs font-semibold text-[#5c5c5c]">
                    {name}
                  </button>
                ))}
              </div>
            </div>
          </div>
        </main>
      </div>
    </div>
  )
}
